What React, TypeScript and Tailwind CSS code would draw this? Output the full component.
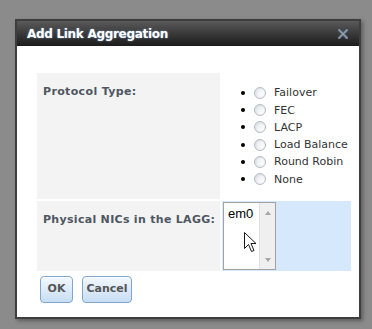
import React from "react";

const options = ["Failover", "FEC", "LACP", "Load Balance", "Round Robin", "None"];

function Radio() {
  return (
    <div className="w-[12px] h-[12px] rounded-full border border-[#b4bcc4] bg-gradient-to-br from-[#d9dde2] to-[#fbfcfd] flex items-center justify-center">
      <div className="w-[7px] h-[7px] rounded-full bg-gradient-to-br from-[#e9ecef] to-[#ffffff]" />
    </div>
  );
}

export default function App() {
  return (
    <div className="w-[372px] h-[329px] bg-[#8b8b8b] pl-[15px] pt-[19px] overflow-hidden">
      <div
        className="w-[346px] h-[300px] border-2 border-[#3e3e3e] bg-white flex flex-col shadow-[2px_2px_4px_rgba(0,0,0,0.35)]"
        style={{ fontFamily: '"DejaVu Sans", Verdana, sans-serif' }}
      >
        <div className="h-[25px] shrink-0 bg-gradient-to-b from-[#5a5a5a] via-[#3a3a3a] to-[#1c1c1c] flex items-center justify-between pl-[10px] pr-[11px]">
          <span className="text-white font-bold text-[12px] leading-none tracking-[-0.3px] [text-shadow:0_0_2px_#6d90b8]">
            Add Link Aggregation
          </span>
          <svg width="10" height="10" viewBox="0 0 10 10" className="mt-[1px]">
            <path d="M1 1 L9 9 M9 1 L1 9" stroke="#6f8193" strokeWidth="2.6" strokeLinecap="square" />
            <path d="M1 1 L9 9 M9 1 L1 9" stroke="#9aa8b6" strokeWidth="0.8" />
          </svg>
        </div>
        <div className="pt-[27px] pl-[20px]">
          <div className="grid grid-cols-[183px_129px] grid-rows-[126px_70px] gap-[2px]">
            <div className="bg-[#f3f3f3] pl-[6px] pt-[12px] text-[11px] font-bold text-[#4e5661] leading-[14px] tracking-[0.35px]">
              Protocol Type:
            </div>
            <div className="flex items-center">
              <div className="flex flex-col">
                {options.map((o) => (
                  <div key={o} className="h-[17.33px] flex items-center pl-[19px]">
                    <div className="w-[4px] h-[4px] rounded-full bg-black" />
                    <div className="ml-[9px]">
                      <Radio />
                    </div>
                    <span className="ml-[8px] text-[11px] text-[#333] leading-none">{o}</span>
                  </div>
                ))}
              </div>
            </div>
            <div className="bg-[#f3f3f3] pl-[6px] pt-[12px] text-[11px] font-bold text-[#4e5661] leading-[14px] tracking-[0.3px]">
              Physical NICs in the LAGG:
            </div>
            <div className="bg-[#d6e9fc] pl-[1px] pt-[1px]">
              <div className="relative w-[53px] h-[68px] border border-[#a2a2a2] bg-white flex">
                <div
                  className="flex-1 pl-[4px] pt-[3px] text-[13px] leading-[15px] text-black"
                  style={{ fontFamily: '"Liberation Sans", Arial, sans-serif' }}
                >
                  em0
                </div>
                <div className="w-[16px] bg-[#efefef] border-l border-[#e2e2e2] flex flex-col items-center justify-between pt-[8px] pb-[7px]">
                  <div className="w-0 h-0 border-l-[3.5px] border-r-[3.5px] border-b-[4px] border-l-transparent border-r-transparent border-b-[#a6a6a6]" />
                  <div className="w-0 h-0 border-l-[3.5px] border-r-[3.5px] border-t-[4px] border-l-transparent border-r-transparent border-t-[#a6a6a6]" />
                </div>
                <svg
                  className="absolute left-[20px] top-[29px]"
                  width="13"
                  height="21"
                  viewBox="0 0 13 21"
                >
                  <path
                    d="M0.5 0.5 L0.5 16.5 L4.5 12.5 L7.5 19.5 L10 18.5 L7 11.5 L12 11.5 Z"
                    fill="white"
                    stroke="#1a1a1a"
                    strokeWidth="1"
                    strokeLinejoin="miter"
                  />
                </svg>
              </div>
            </div>
          </div>
          <div className="flex gap-[9px] pl-[3px] mt-[5px]">
            <button className="w-[33px] h-[27px] rounded-[4px] border border-[#7fa6cd] bg-gradient-to-b from-[#f3f8fe] to-[#c8ddf4] text-[11px] font-bold text-[#555] shadow-[inset_0_1px_0_#ffffff]">
              OK
            </button>
            <button className="w-[50px] h-[27px] rounded-[4px] border border-[#7fa6cd] bg-gradient-to-b from-[#f3f8fe] to-[#c8ddf4] text-[11px] font-bold text-[#555] shadow-[inset_0_1px_0_#ffffff]">
              Cancel
            </button>
          </div>
        </div>
      </div>
    </div>
  );
}
